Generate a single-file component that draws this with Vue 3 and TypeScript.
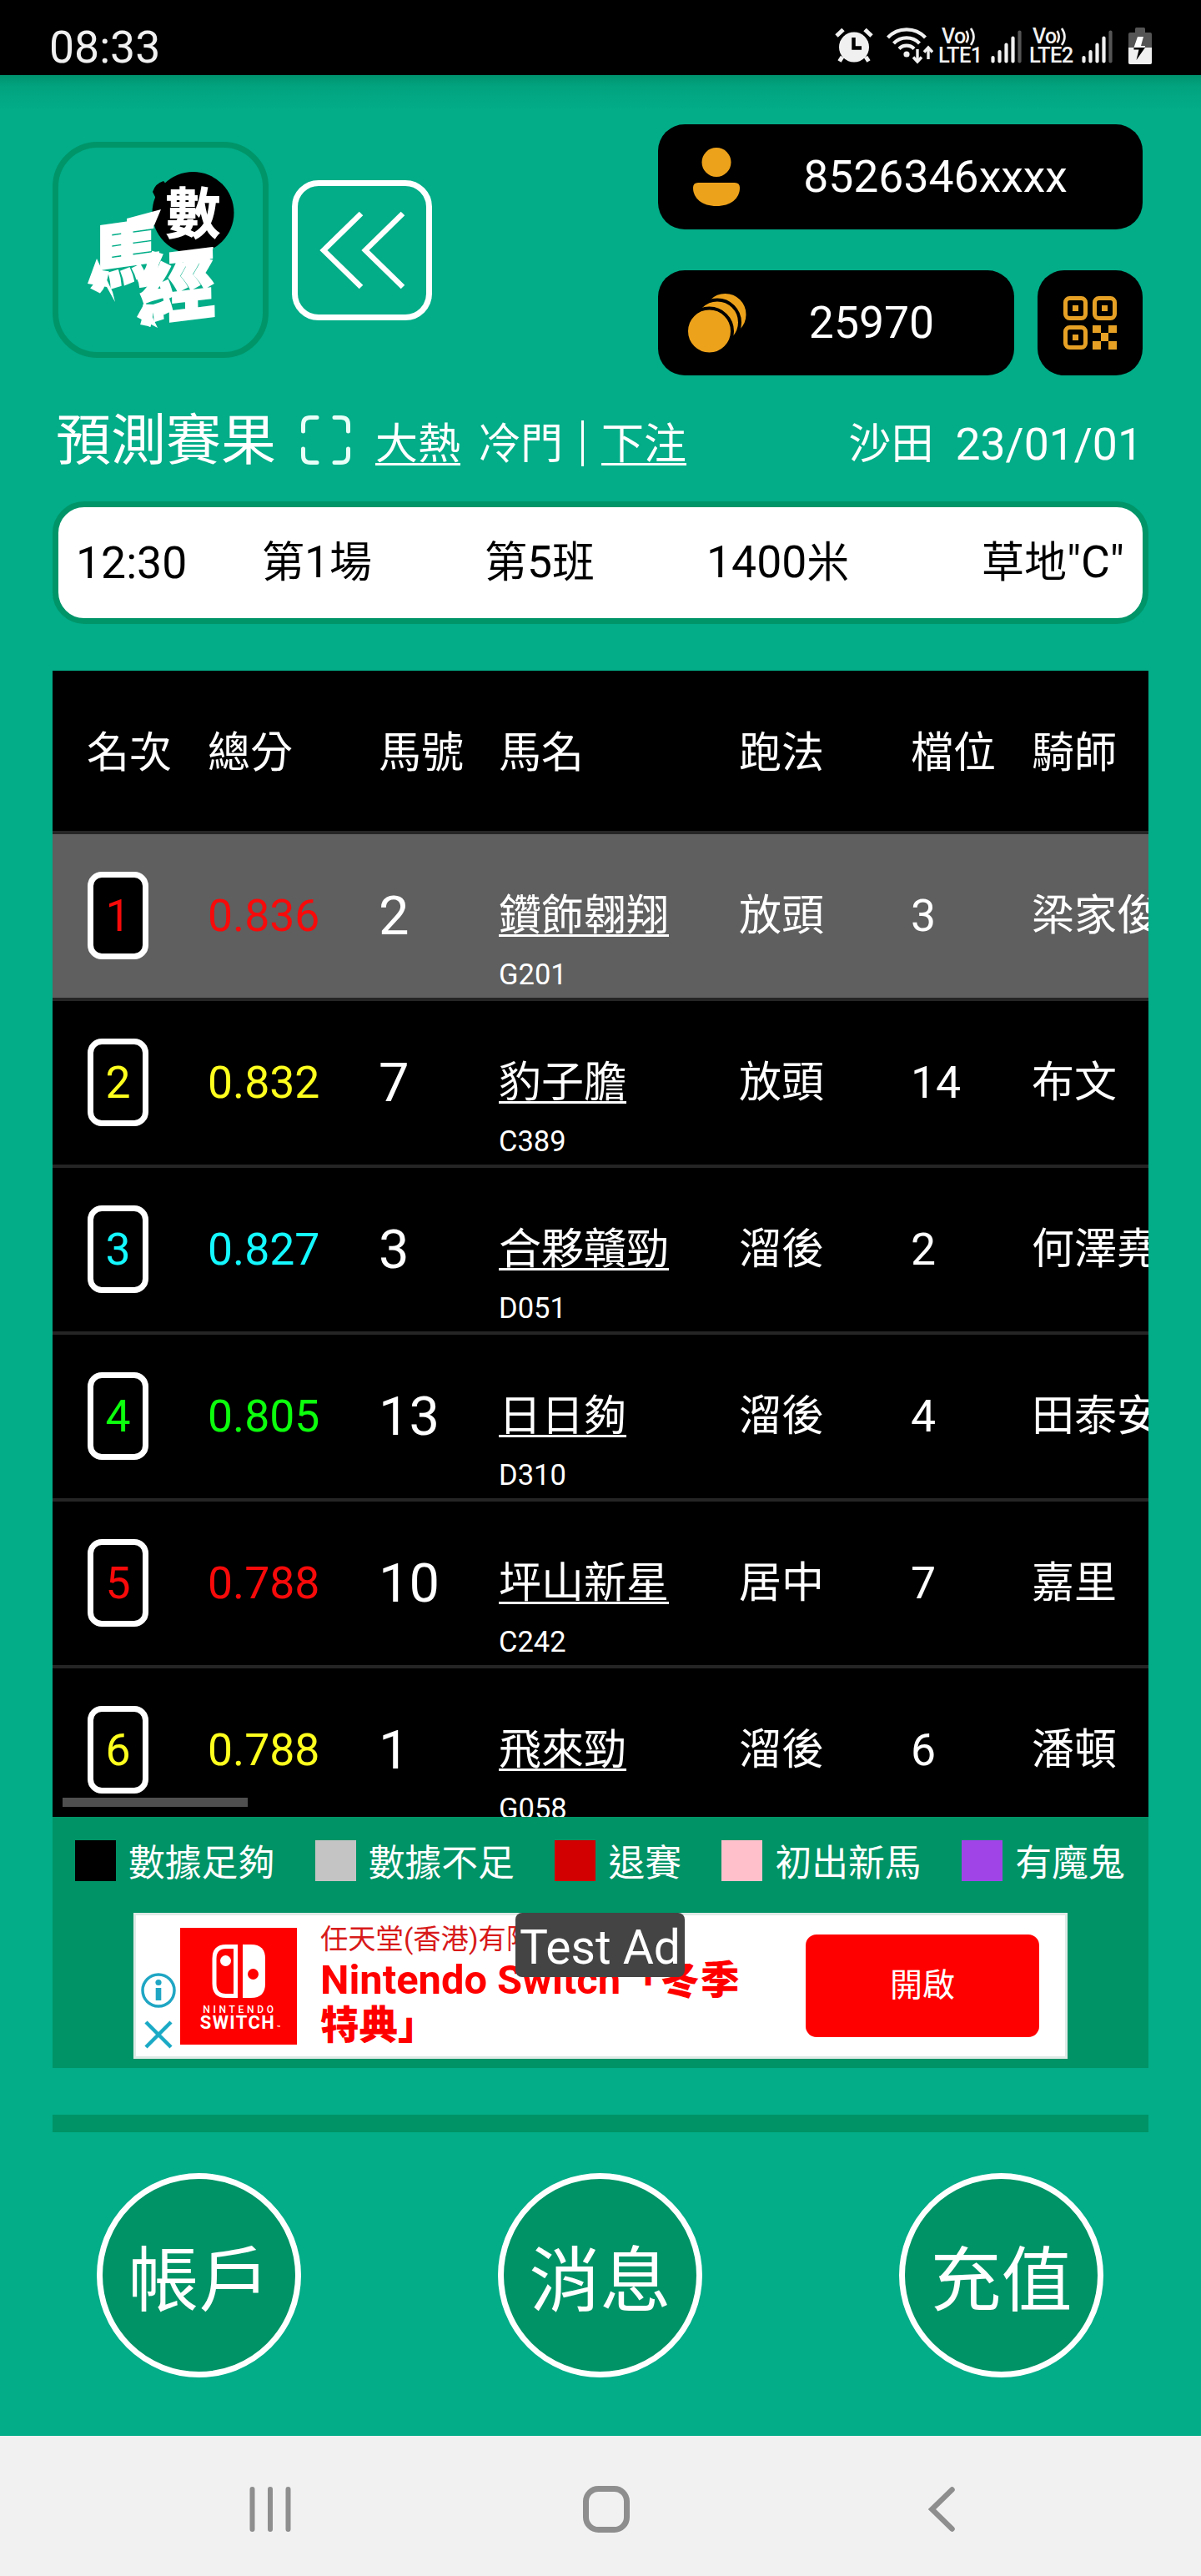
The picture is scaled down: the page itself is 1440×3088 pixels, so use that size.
<script setup lang="ts">
interface Horse {
  rank: number
  score: string
  color: string
  no: number
  name: string
  code: string
  style: string
  gate: string
  jockey: string
}

const columns: string[] = ['名次', '總分', '馬號', '馬名', '跑法', '檔位', '騎師']

const horses: Horse[] = [
  { rank: 1, score: '0.836', color: '#f80a0a', no: 2, name: '鑽飾翱翔', code: 'G201', style: '放頭', gate: '3', jockey: '梁家俊' },
  { rank: 2, score: '0.832', color: '#ffff1e', no: 7, name: '豹子膽', code: 'C389', style: '放頭', gate: '14', jockey: '布文' },
  { rank: 3, score: '0.827', color: '#14f8ff', no: 3, name: '合夥贛勁', code: 'D051', style: '溜後', gate: '2', jockey: '何澤堯' },
  { rank: 4, score: '0.805', color: '#0cff0c', no: 13, name: '日日夠', code: 'D310', style: '溜後', gate: '4', jockey: '田泰安' },
  { rank: 5, score: '0.788', color: '#f80a0a', no: 10, name: '坪山新星', code: 'C242', style: '居中', gate: '7', jockey: '嘉里' },
  { rank: 6, score: '0.788', color: '#ffff1e', no: 1, name: '飛來勁', code: 'G058', style: '溜後', gate: '6', jockey: '潘頓' },
]

const legend: { color: string; label: string }[] = [
  { color: '#000000', label: '數據足夠' },
  { color: '#c4c4c4', label: '數據不足' },
  { color: '#d20000', label: '退賽' },
  { color: '#ffc0cb', label: '初出新馬' },
  { color: '#a044e8', label: '有魔鬼' },
]

const actions: string[] = ['帳戶', '消息', '充值']
const sims: string[] = ['LTE1', 'LTE2']
</script>

<template>
  <div class="screen">
    <header class="status">
      <span class="clock">08:33</span>
      <div class="status-icons">
        <svg class="alarm" width="46" height="44" viewBox="0 0 46 44">
          <g fill="none" stroke="#f0f0f0" stroke-width="5">
            <path d="M2 10 L10 2.500 M44 10 L36 2.500" />
            <path d="M9 35 L5.500 40.500 M37 35 L40.500 40.500" />
          </g>
          <circle cx="23" cy="23.500" r="18" fill="#f0f0f0" />
          <path d="M22.500 12 V24.500 H32" fill="none" stroke="#000" stroke-width="4.500" />
        </svg>
        <svg class="wifi" width="56" height="44" viewBox="0 0 56 44">
          <g fill="none" stroke="#f0f0f0" stroke-width="4.200">
            <path d="M1.500 12 A31 31 0 0 1 46.500 12" />
            <path d="M8.500 19 A21.500 21.500 0 0 1 39.500 19" />
            <path d="M15 25.500 A12.500 12.500 0 0 1 33 25.500" />
            <path d="M37 26 V41 M50 38 V25" stroke-width="3.400" />
            <path d="M32 35.500 L37 41 L42 35.500 M45 29.500 L50 24 L55 29.500" stroke-width="3.400" />
          </g>
          <circle cx="24" cy="32" r="3.600" fill="#f0f0f0" />
        </svg>
        <template v-for="sim in sims" :key="sim">
          <div class="sim">
            <div class="vo">Vo<svg width="13" height="22" viewBox="0 0 13 22"><path d="M1.500 4 Q6 11 1.500 18 M7 1 Q14 11 7 21" fill="none" stroke="#f0f0f0" stroke-width="2.600" /></svg></div>
            <div class="lte">{{ sim }}</div>
          </div>
          <svg class="signal" width="37" height="40" viewBox="0 0 37 40">
            <g stroke-width="4.200" stroke-linecap="round" stroke="#f0f0f0">
              <path d="M2.500 33 V37.500 M10.500 26 V37.500 M18.500 17.500 V37.500 M26.500 9.500 V37.500" />
              <path d="M34.500 2.500 V37.500" stroke="#555" />
            </g>
          </svg>
        </template>
        <svg class="battery" width="28" height="44" viewBox="0 0 28 44">
          <rect x="8" y="0" width="12" height="8" rx="1.500" fill="#555" />
          <rect x="0" y="6" width="28" height="38" rx="2" fill="#555" />
          <path d="M0 24 H28 V42 Q28 44 26 44 H2 Q0 44 0 42 Z" fill="#f0f0f0" />
          <path d="M11 11 H18 L15 22 H20 L19.500 24 H6.500 Z" fill="#fff" />
          <path d="M6.500 24 H20 L9.500 39 L12.500 26.500 H6.500 Z" fill="#000" />
        </svg>
      </div>
    </header>

    <main class="app">
      <section class="top">
        <div class="logo">
          <svg width="210" height="220" viewBox="0 0 210 220">
            <circle cx="141.500" cy="65" r="49" fill="#000" />
            <path d="M93 40 Q96 30 106 27 L112 34 L98 50 Z" fill="#000" />
            <g class="logo-text" text-anchor="middle">
              <text class="logo-serif" transform="translate(141.500 90)" font-size="66">數</text>
              <text transform="translate(61 148) rotate(-8) skewX(-8)" font-size="86">馬</text>
              <text transform="translate(123 188) rotate(-7) skewX(-6)" font-size="92">經</text>
            </g>
            <path d="M62 72 L103 61 L95 80 L62 86 Z M130 119 L166 106 L161 123 L130 130 Z M15 150 L26 120 L45 160 L48 172 L38 154 Z M74 190 L84 172 L99 203 Z" fill="#fff" />
          </svg>
        </div>
        <button class="back" aria-label="back">
          <svg width="104" height="94" viewBox="0 0 104 94">
            <path d="M51 3 L6 47 L51 91 M101 3 L56 47 L101 91" fill="none" stroke="#fff" stroke-width="6.500" />
          </svg>
        </button>
        <div class="pills">
          <div class="pill">
            <svg class="pill-icon" width="58" height="74" viewBox="0 0 58 74">
              <circle cx="29" cy="19.500" r="17.500" fill="#eda21b" />
              <path d="M7 44 H51 Q57 44 57 50 C57 63 46 72 29 72 C12 72 1 63 1 50 Q1 44 7 44 Z" fill="#eda21b" />
            </svg>
            <span class="pill-text">8526346xxxx</span>
          </div>
          <div class="pill-row">
            <div class="pill coins">
              <svg class="pill-icon" width="74" height="74" viewBox="0 0 74 74">
                <g fill="#eda21b" stroke="#000" stroke-width="4">
                  <circle cx="46.500" cy="27" r="27" />
                  <circle cx="37" cy="36.500" r="27" />
                  <circle cx="27.500" cy="47" r="27.500" />
                </g>
              </svg>
              <span class="pill-text">25970</span>
            </div>
            <div class="pill qr">
              <svg width="64" height="64" viewBox="0 0 64 64">
                <g fill="none" stroke="#e6a125" stroke-width="5">
                  <rect x="2.500" y="2.500" width="24" height="24" rx="5" />
                  <rect x="37.500" y="2.500" width="24" height="24" rx="5" />
                  <rect x="2.500" y="37.500" width="24" height="24" rx="5" />
                </g>
                <g fill="#e6a125">
                  <rect x="11" y="11" width="7" height="7" />
                  <rect x="46" y="11" width="7" height="7" />
                  <rect x="11" y="46" width="7" height="7" />
                  <path d="M35 35h10v9h9v-9h10v9h-10v10h10v10h-10v-10h-9v10h-10v-10h10v-10h-10z" />
                </g>
              </svg>
            </div>
          </div>
        </div>
      </section>

      <section class="title-row">
        <h1>預測賽果</h1>
        <svg class="frame" width="59" height="59" viewBox="0 0 59 59">
          <path d="M19 2.500 H11 Q2.500 2.500 2.500 11 V19 M40 2.500 H48 Q56.500 2.500 56.500 11 V19 M19 56.500 H11 Q2.500 56.500 2.500 48 V40 M40 56.500 H48 Q56.500 56.500 56.500 48 V40" fill="none" stroke="#e8fff8" stroke-width="5" stroke-linecap="round" />
        </svg>
        <a class="hot">大熱</a>
        <span class="cold">冷門</span>
        <i class="bar"></i>
        <a class="bet">下注</a>
        <span class="venue">沙田</span>
        <span class="date">23/01/01</span>
      </section>

      <section class="race">
        <span>12:30</span>
        <span><b>第</b>1<b>場</b></span>
        <span><b>第</b>5<b>班</b></span>
        <span>1400<b>米</b></span>
        <span class="last"><b>草地</b>"C"</span>
      </section>

      <section class="table">
        <div class="row head">
          <span v-for="c in columns" :key="c" class="han">{{ c }}</span>
        </div>
        <div v-for="h in horses" :key="h.rank" class="row" :class="{ active: h.rank === 1 }">
          <span class="badge" :style="{ color: h.color }">{{ h.rank }}</span>
          <span :style="{ color: h.color }">{{ h.score }}</span>
          <span class="number">{{ h.no }}</span>
          <span class="horse">
            <a class="han">{{ h.name }}</a>
            <small>{{ h.code }}</small>
          </span>
          <span class="han">{{ h.style }}</span>
          <span>{{ h.gate }}</span>
          <span class="han">{{ h.jockey }}</span>
        </div>
        <div class="scrollbar"></div>
      </section>

      <section class="panel">
        <div class="legend">
          <div v-for="l in legend" :key="l.label" class="legend-item">
            <i :style="{ background: l.color }"></i><span>{{ l.label }}</span>
          </div>
        </div>
        <div class="ad">
          <div class="ad-marks">
            <svg width="42" height="42" viewBox="0 0 42 42">
              <circle cx="21" cy="21" r="19" fill="none" stroke="#1fa6c4" stroke-width="3.500" />
              <circle cx="21" cy="11.500" r="3.600" fill="#1fa6c4" />
              <rect x="17.700" y="18" width="6.600" height="15" fill="#1fa6c4" />
            </svg>
            <svg width="34" height="34" viewBox="0 0 34 34">
              <path d="M2 2 L32 32 M32 2 L2 32" stroke="#1baac6" stroke-width="4.500" />
            </svg>
          </div>
          <div class="switch">
            <svg width="64" height="64" viewBox="0 0 64 64">
              <path d="M28.500 2.500 H17 Q3 2.500 3 17 V47 Q3 61.500 17 61.500 H28.500 Z" fill="none" stroke="#fff" stroke-width="5" />
              <circle cx="16.500" cy="19.500" r="6.500" fill="#fff" />
              <path d="M37 0 H47 Q64 0 64 17 V47 Q64 64 47 64 H37 Z" fill="#fff" />
              <circle cx="49.500" cy="35.500" r="6.500" fill="#f00" />
            </svg>
            <span class="sw1">NINTENDO</span>
            <span class="sw2">SWITCH<sub>™</sub></span>
          </div>
          <div class="ad-copy">
            <div class="ad-company">任天堂(香港)有限公司</div>
            <div class="ad-title">Nintendo Switch<b>「冬季</b></div>
            <div class="ad-title"><b>特典」</b></div>
          </div>
          <button class="open">開啟</button>
          <div class="test">Test Ad</div>
        </div>
      </section>

      <div class="strip"></div>

      <nav class="actions">
        <button v-for="a in actions" :key="a">{{ a }}</button>
      </nav>
    </main>

    <footer class="system">
      <svg width="50" height="54" viewBox="0 0 50 54">
        <path d="M3.500 3 V51 M25 3 V51 M46.500 3 V51" stroke="#8e8e8e" stroke-width="6" stroke-linecap="round" />
      </svg>
      <svg width="56" height="56" viewBox="0 0 56 56">
        <rect x="3.500" y="3.500" width="49" height="49" rx="15" fill="none" stroke="#8e8e8e" stroke-width="7" />
      </svg>
      <svg width="32" height="54" viewBox="0 0 32 54">
        <path d="M28.500 3.500 L4.500 27 L28.500 50.500" fill="none" stroke="#8e8e8e" stroke-width="6.500" stroke-linecap="round" />
      </svg>
    </footer>
  </div>
</template>

<style>
body {
  margin: 0;
}
</style>

<style scoped>
* {
  box-sizing: border-box;
}

.screen {
  display: flex;
  flex-direction: column;
  width: 1440px;
  height: 3088px;
  overflow: hidden;
  background: #02ad88;
  color: #fff;
  font-family: Roboto, "Noto Sans CJK TC", sans-serif;
  font-size: 53.500px;
  line-height: 80px;
  white-space: nowrap;
}

button {
  margin: 0;
  padding: 0;
  color: #fff;
  font-family: inherit;
}

svg {
  display: block;
  flex: none;
}

.status {
  display: flex;
  justify-content: space-between;
  flex: none;
  height: 90px;
  padding: 0 59px;
  background: #000;
}

.clock {
  line-height: 114px;
  color: #f0f0f0;
}

.status-icons {
  display: flex;
  align-items: flex-start;
  padding-top: 33px;
  color: #f0f0f0;
}

.alarm {
  margin-right: 16px;
}

.wifi {
  margin-right: 6px;
}

.sim {
  width: 54px;
  margin-right: 9px;
  font-weight: 500;
  line-height: 22px;
}

.vo {
  display: flex;
  padding-left: 4px;
  font-size: 25px;
  letter-spacing: -0.7px;
  line-height: 22px;
}

.lte {
  font-size: 25.500px;
  letter-spacing: -0.6px;
}

.signal {
  margin: 3px 9px 0 0;
}

.signal + .battery {
  margin-left: 10px;
}

.app {
  display: flex;
  flex-direction: column;
  flex: 1;
  padding: 0 63px;
  background: linear-gradient(#00936f, #02a37f 14px, #02ad88 42px);
}

.top {
  display: flex;
  flex: none;
  height: 360px;
  padding-top: 59px;
}

.logo {
  display: flex;
  align-items: center;
  justify-content: center;
  width: 259px;
  height: 259px;
  margin: 21px 28px 0 0;
  padding-left: 4px;
  border: 7px solid #009569;
  border-radius: 54px;
}

.logo-text text {
  fill: #fff;
  stroke: #fff;
  stroke-width: 2px;
  font-family: "Noto Sans CJK TC", sans-serif;
  font-weight: 900;
}

.logo-text .logo-serif {
  stroke-width: 0;
}

.back {
  display: flex;
  align-items: center;
  justify-content: center;
  width: 168px;
  height: 168px;
  margin-top: 67px;
  border: 7px solid #fff;
  border-radius: 32px;
  background: none;
}

.pills {
  width: 581px;
  margin-left: 271px;
}

.pill-row {
  display: flex;
  gap: 28px;
  margin-top: 49px;
}

.pill {
  display: flex;
  align-items: center;
  height: 126px;
  border-radius: 32px;
  background: #000;
}

.pill .pill-icon {
  width: 74px;
  margin-left: 34px;
}

.pill:not(.coins) .pill-icon {
  margin-left: 33px;
}

.pill-text {
  flex: 1;
  margin-left: -23px;
  text-align: center;
}

.coins {
  width: 427px;
}

.qr {
  justify-content: center;
  width: 126px;
}

.title-row {
  display: flex;
  align-items: center;
  flex: none;
  height: 68px;
  margin: 43px 0 40px;
  padding: 0 7px 0 4px;
  font-size: 51px;
}

h1 {
  width: 294px;
  margin: 0;
  padding-top: 4px;
  font-size: 66px;
  font-weight: 400;
}

.hot,
.bet,
.horse a {
  text-decoration: underline;
  text-decoration-thickness: 3px;
  text-decoration-skip-ink: none;
  text-underline-offset: 5px;
}

.hot,
.cold,
.bet,
.venue,
.date {
  padding-top: 12px;
}

.hot {
  margin-left: 30px;
}

.cold {
  margin-left: 21px;
}

.bar {
  width: 3px;
  height: 55px;
  margin: 8px 21px 0 22px;
  background: #fff;
}

.venue {
  margin-left: auto;
}

.date {
  margin-left: 26px;
  font-size: 53.500px;
}

.race {
  display: grid;
  grid-template-columns: 223px 267px 266px 260px 1fr;
  align-items: center;
  flex: none;
  height: 147px;
  padding: 0 22px 0 21px;
  border: 7px solid #009569;
  border-radius: 38px;
  background: #fff;
  color: #000;
}

.race b {
  font-size: 51px;
  font-weight: 400;
}

.race .last {
  text-align: right;
}

.table {
  position: relative;
  flex: none;
  height: 1374px;
  margin-top: 56px;
  overflow: hidden;
  background: #000;
}

.row {
  display: grid;
  grid-template-columns: 145px 205px 144px 288px 206px 145px 200px;
  align-items: center;
  height: 200px;
  padding-left: 41px;
  border-bottom: 4px solid #252525;
}

.row.head {
  height: 196px;
  padding-top: 5px;
}

.row.active {
  background: #5f5f5f;
}

.han {
  font-size: 51px;
}

.badge {
  display: flex;
  align-items: center;
  justify-content: center;
  width: 73px;
  height: 105px;
  margin: 0 0 2px 1px;
  padding-top: 2px;
  border: 7px solid #fff;
  border-radius: 17px;
  background: #000;
}

.number {
  font-size: 65px;
}

.horse {
  display: flex;
  flex-direction: column;
  align-items: flex-start;
  height: 196px;
  padding-top: 58px;
}

.horse small {
  font-size: 34.500px;
  line-height: 60px;
}

.scrollbar {
  position: absolute;
  left: 12px;
  bottom: 12px;
  width: 222px;
  height: 11px;
  background: #4f4f4f;
}

.panel {
  flex: none;
  height: 301px;
  background: #009366;
}

.legend {
  display: flex;
  gap: 48.500px;
  height: 115px;
  padding: 28px 0 0 27px;
  font-size: 43.800px;
  line-height: 57px;
}

.legend-item {
  display: flex;
  gap: 15px;
}

.legend-item i {
  width: 49px;
  height: 49px;
}

.ad {
  position: relative;
  display: flex;
  width: 1120px;
  height: 175px;
  margin-left: 97px;
  border: 3px solid #dfeae6;
  background: #fff;
}

.ad-marks {
  display: flex;
  flex-direction: column;
  align-items: center;
  gap: 15px;
  width: 42px;
  margin: 69px 5px 0 6px;
}

.switch {
  display: flex;
  flex-direction: column;
  align-items: center;
  width: 140px;
  height: 140px;
  margin-top: 15px;
  padding-top: 20px;
  background: #f00;
  font-weight: 500;
}

.sw1 {
  margin-top: 8px;
  padding-left: 3px;
  font-size: 12px;
  letter-spacing: 3.700px;
  line-height: 12px;
}

.sw2 {
  position: relative;
  margin-left: -2px;
  font-size: 22px;
  font-weight: 700;
  letter-spacing: 1.400px;
  line-height: 20px;
}

.sw2 sub {
  position: absolute;
  right: -6px;
  bottom: -2px;
  font-size: 7px;
  letter-spacing: 0;
  line-height: 12px;
}

.ad-copy {
  width: 610px;
  padding-top: 7px;
  padding-left: 28px;
  color: #f00;
}

.ad-company {
  color: #d81a1a;
  font-size: 33.300px;
  line-height: 44px;
}

.ad-title {
  font-size: 48.800px;
  font-weight: 700;
  line-height: 54px;
}

.ad-title b {
  font-size: 46.500px;
}

.ad-title:not(:last-child) b {
  letter-spacing: 1.500px;
}

.open {
  width: 280px;
  height: 123px;
  margin-top: 23px;
  padding-bottom: 9px;
  border: 0;
  border-radius: 13px;
  background: #f00;
  font-size: 39px;
}

.test {
  position: absolute;
  top: -3px;
  left: 455px;
  width: 203px;
  height: 77px;
  border-radius: 8px;
  background: #444;
  font-size: 57px;
  line-height: 84px;
  text-align: center;
}

.strip {
  flex: none;
  height: 21px;
  margin-top: 56px;
  background: #009366;
}

.actions {
  display: flex;
  justify-content: space-between;
  margin-top: 49px;
  padding: 0 54px 0 53px;
}

.actions button {
  width: 245px;
  height: 245px;
  padding-bottom: 2px;
  border: 7px solid #fff;
  border-radius: 50%;
  background: #009366;
  font-size: 85px;
}

.system {
  display: flex;
  align-items: center;
  flex: none;
  height: 168px;
  padding: 7px 0 0 299px;
  background: #f1f1f1;
}

.system svg:nth-child(2) {
  margin: 0 358px 0 350px;
}
</style>
